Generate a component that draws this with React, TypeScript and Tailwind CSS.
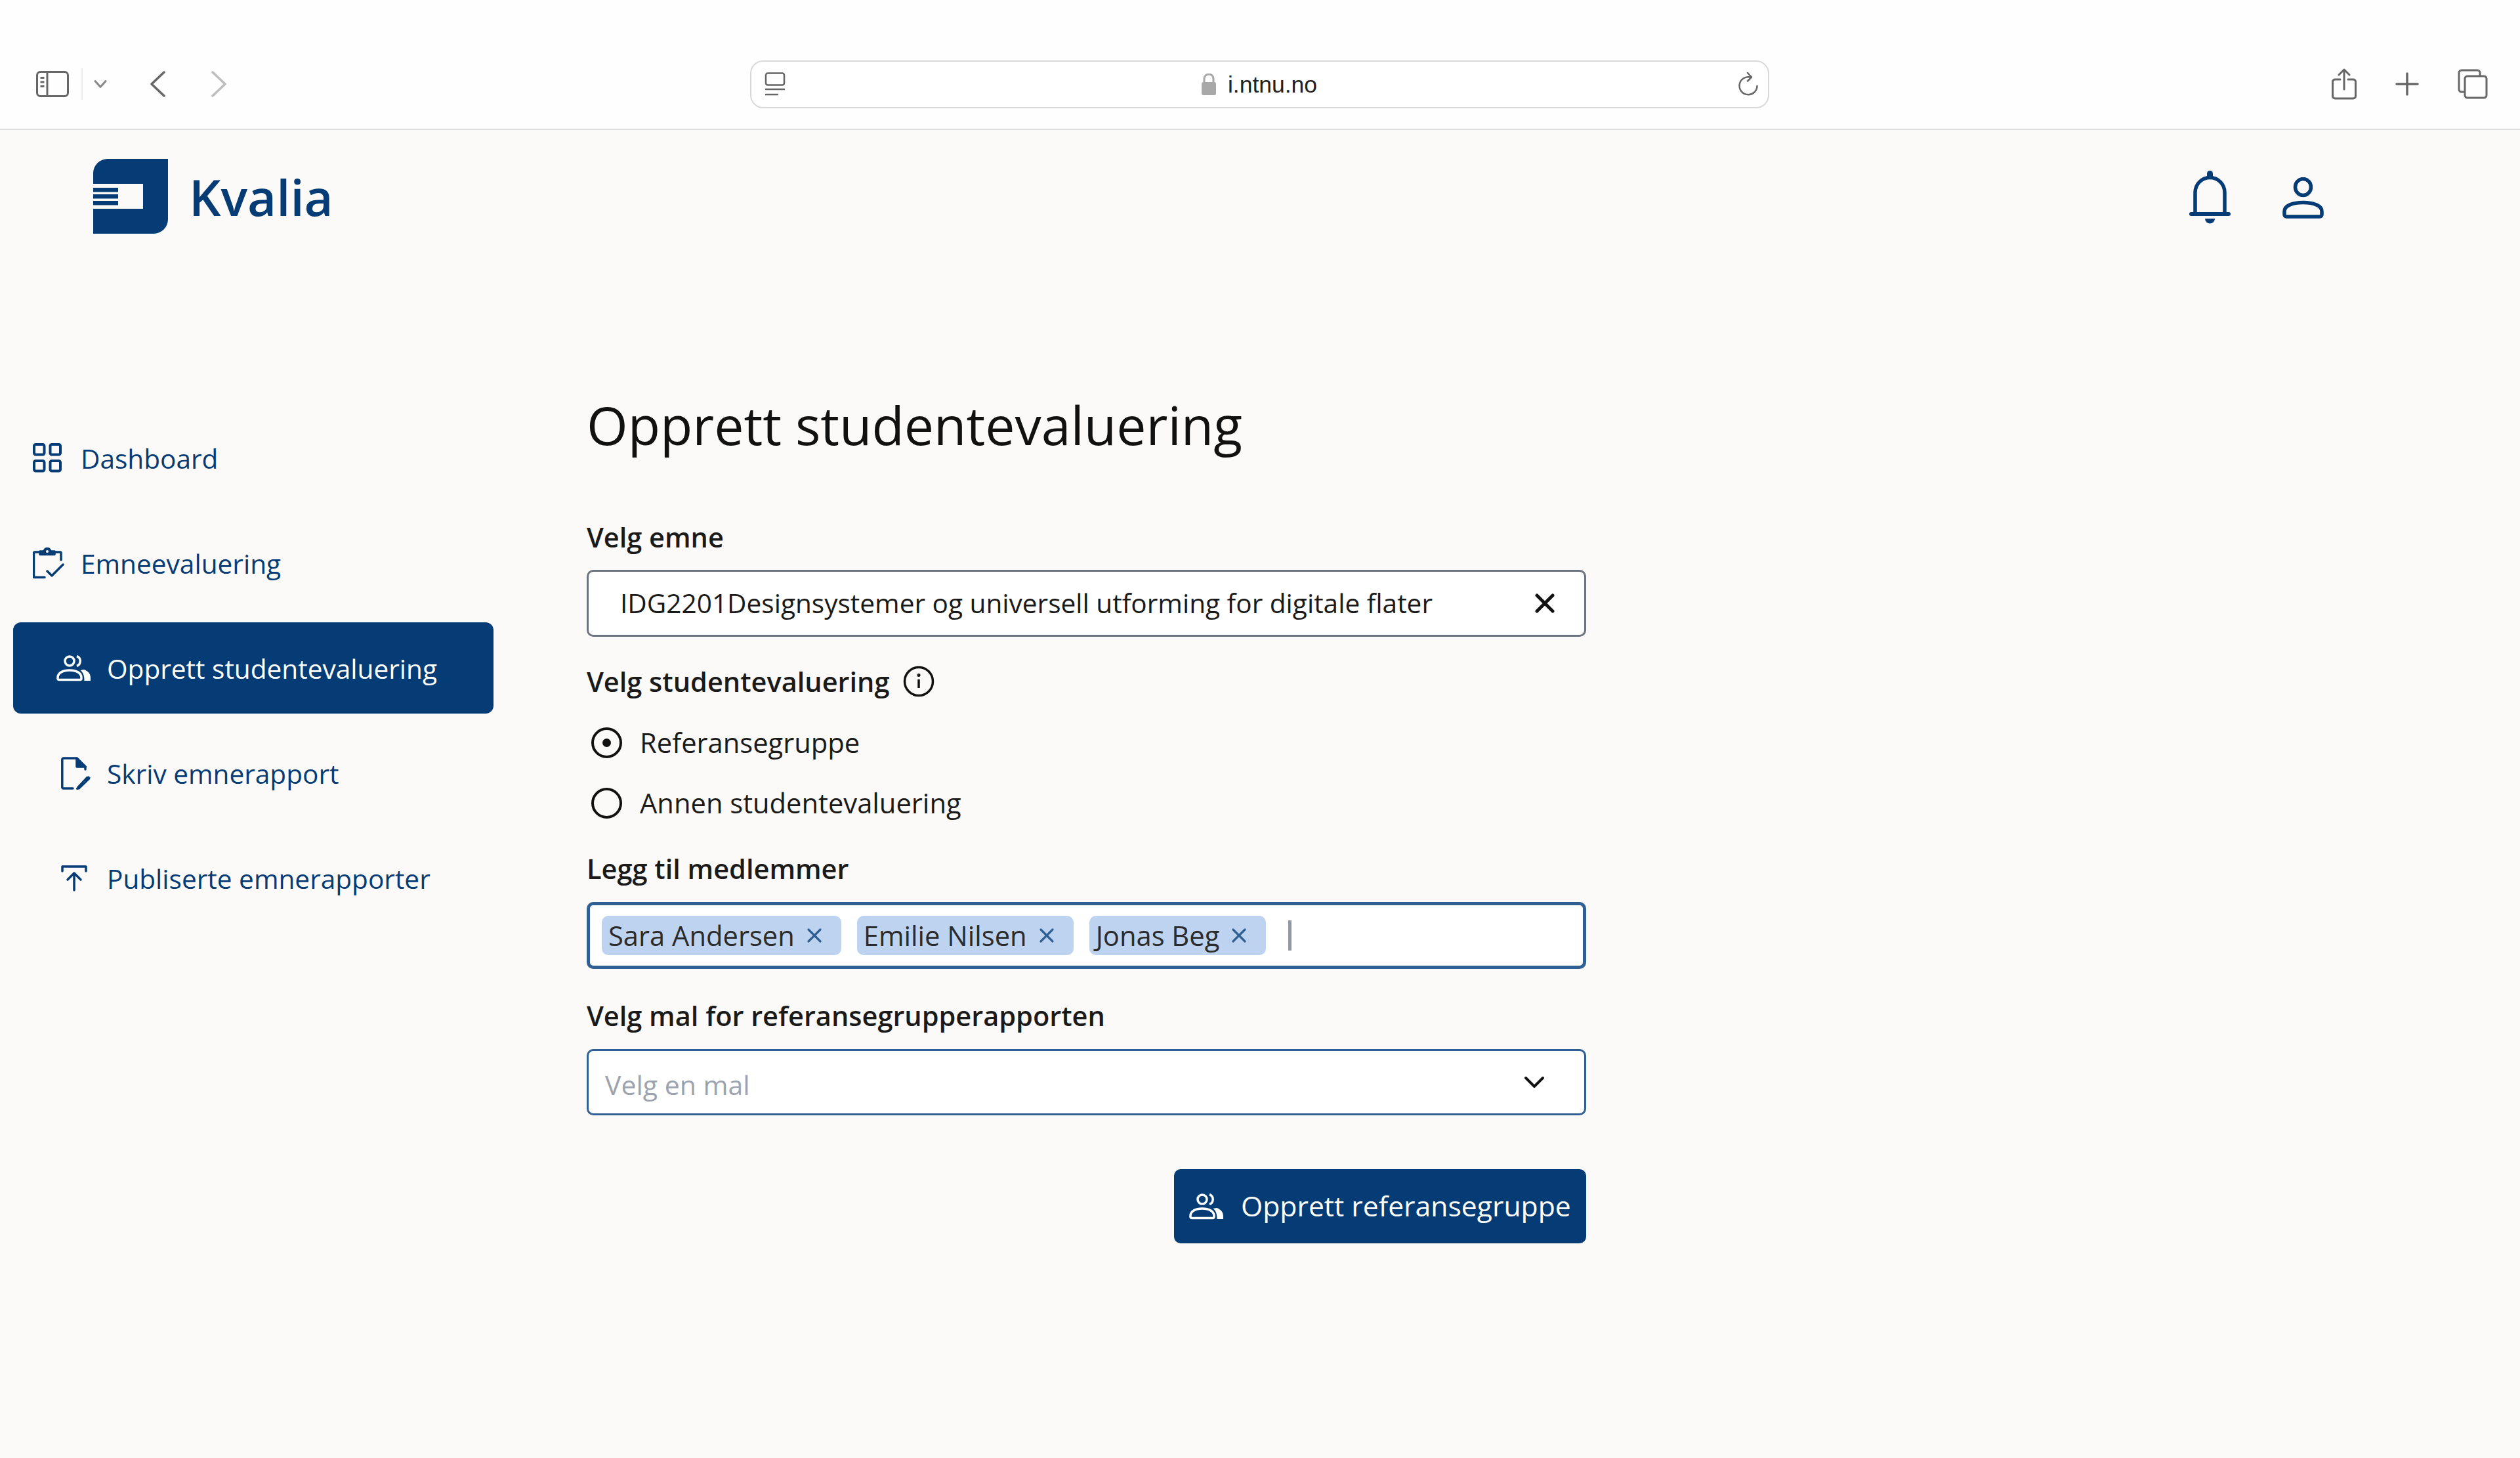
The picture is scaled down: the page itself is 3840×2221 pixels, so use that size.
import type { ReactNode } from 'react';

const navy = '#053c75';

function Logo() {
  return (
    <svg width="114" height="114" viewBox="0 0 114 114" className="shrink-0">
      <path d="M0 114V22A22 22 0 0 1 22 0H114V92A22 22 0 0 1 92 114Z" fill={navy} />
      <rect x="0" y="38" width="76" height="38" fill="#fbfaf8" />
      <rect x="0" y="44" width="38" height="6.5" fill={navy} />
      <rect x="0" y="54" width="38" height="6.5" fill={navy} />
      <rect x="0" y="64" width="38" height="6.5" fill={navy} />
    </svg>
  );
}

function DashboardIcon() {
  return (
    <svg width="44" height="45" viewBox="0 0 44 45" fill="none" stroke={navy} strokeWidth="4">
      <rect x="2" y="2" width="15.5" height="15.5" rx="2.5" />
      <rect x="26.5" y="2" width="15.5" height="15.5" rx="2.5" />
      <rect x="2" y="27" width="15.5" height="15.5" rx="2.5" />
      <rect x="26.5" y="27" width="15.5" height="15.5" rx="2.5" />
    </svg>
  );
}

function ClipboardCheckIcon() {
  return (
    <svg width="48" height="48" viewBox="0 0 48 48" fill="none" stroke={navy} strokeWidth="3.5" strokeLinecap="round" strokeLinejoin="round">
      <path d="M11 7H3a1.5 1.5 0 0 0-1.5 1.500V45.500H18" />
      <path d="M33 7h8.500A1.500 1.500 0 0 1 43 8.500V19" />
      <path d="M11 10.500V6h6.500a4.500 4.500 0 0 1 9 0H33v4.500Z" fill={navy} />
      <circle cx="22" cy="6" r="2" fill="#fbfaf8" stroke="none" />
      <path d="M22 36l7 7 17-17" strokeWidth="3.500" />
    </svg>
  );
}

function PeopleIcon({ color }: { color: string }) {
  return (
    <svg width="53" height="40" viewBox="0 0 53 40" fill="none" stroke={color} strokeWidth="3.500">
      <circle cx="20" cy="9" r="7" />
      <path d="M2 34c0-7 8-11 18-11s18 4 18 11v1.500a2 2 0 0 1-2 2H4a2 2 0 0 1-2-2Z" />
      <path d="M31 1.500a8 8 0 0 1 0 15" strokeWidth="3.500" />
      <path d="M42 22c6 2 10 6 10 13v4H42.500c0-7-1-12-6-16Z" fill={color} stroke="none" />
    </svg>
  );
}

function DocumentEditIcon() {
  return (
    <svg width="46" height="50" viewBox="0 0 46 50" fill="none" stroke={navy} strokeWidth="3.500" strokeLinecap="round" strokeLinejoin="round">
      <path d="M18 48H3.500A1.800 1.800 0 0 1 1.800 46V4A2 2 0 0 1 3.800 2H24l13 13v4" />
      <path d="M24 2v13h13Z" fill={navy} />
      <path d="M26 46l-1.500 2.500 3-.5 15-14.500-2.500-2.500Z" strokeWidth="3" />
      <path d="M35 36l7-7 3 3-7 7Z" fill={navy} stroke="none" />
    </svg>
  );
}

function UploadIcon() {
  return (
    <svg width="40" height="40" viewBox="0 0 40 40" fill="none" stroke={navy} strokeWidth="3.500" strokeLinecap="round" strokeLinejoin="round">
      <path d="M2 9V2h36v7" />
      <path d="M20 38V13M10 22l10-10 10 10" />
    </svg>
  );
}

function NavItem({ icon, label, active, indent }: { icon: ReactNode; label: string; active?: boolean; indent?: boolean }) {
  return (
    <a
      className={
        active
          ? 'flex h-[139px] items-center rounded-[12px] bg-[#053c75] pl-[66px] text-white'
          : indent
            ? 'flex h-[139px] items-center pl-[73px] text-[#053c75]'
            : 'flex h-[139px] items-center pl-[30px] text-[#053c75]'
      }
    >
      <span className={active ? 'flex w-[77px] shrink-0 items-center' : indent ? 'flex w-[70px] shrink-0 items-center' : 'flex w-[73px] shrink-0 items-center'}>{icon}</span>
      <span className="pt-[3px] text-[40.6px] leading-none">{label}</span>
    </a>
  );
}

function Chip({ name }: { name: string }) {
  return (
    <span className="flex h-[60px] items-center gap-[18px] rounded-[10px] bg-[#bdd3f0] pl-[10px] pr-[29px] text-[41.7px] leading-none text-[#2b2b2b]">
      {name}
      <svg width="24" height="24" viewBox="0 0 24 24" stroke="#2f5f93" strokeWidth="3.200" strokeLinecap="round">
        <path d="M3 3l18 18M21 3L3 21" />
      </svg>
    </span>
  );
}

export default function App() {
  return (
    <div className="flex h-[2221px] flex-col overflow-hidden bg-[#fbfaf8] font-['Open_Sans',sans-serif]">
      {/* browser chrome */}
      <div className="flex h-[198px] shrink-0 items-center border-b-2 border-[#dfdfdf] bg-[#fefefe] pt-[60px]">
        <div className="flex w-[1143px] shrink-0 items-center pl-[55px]">
          <svg width="50" height="40" viewBox="0 0 50 40" fill="none" stroke="#666" strokeWidth="3">
            <rect x="1.500" y="1.500" width="47" height="37" rx="5" />
            <path d="M17 1.500v37" />
            <path d="M6.500 10.500h6M6.500 17h6M6.500 23.500h6" />
          </svg>
          <span className="ml-[19px] h-[48px] w-[2px] bg-[#ececec]" />
          <svg width="20" height="14" viewBox="0 0 20 14" fill="none" stroke="#888" strokeWidth="3" strokeLinecap="round" strokeLinejoin="round" className="ml-[17px]">
            <path d="M2 2.500l8 9 8-9" />
          </svg>
          <svg width="24" height="40" viewBox="0 0 24 40" fill="none" stroke="#666" strokeWidth="3.500" strokeLinecap="round" strokeLinejoin="round" className="ml-[65px]">
            <path d="M22 2L3 20l19 18" />
          </svg>
          <svg width="24" height="40" viewBox="0 0 24 40" fill="none" stroke="#bdbdbd" strokeWidth="3.500" strokeLinecap="round" strokeLinejoin="round" className="ml-[70px]">
            <path d="M2 2l19 18L2 38" />
          </svg>
        </div>

        <div className="flex h-[73px] w-[1553px] shrink-0 items-center rounded-[20px] border-2 border-[#d9d9d9] bg-white pl-[20px] pr-[14px]">
          <svg width="32" height="36" viewBox="0 0 32 36" fill="none" stroke="#666" strokeWidth="2.500" strokeLinecap="round">
            <rect x="2" y="1.500" width="28" height="18" rx="3" />
            <path d="M2 26h28M2 34h18" />
          </svg>
          <div className="flex flex-1 items-center justify-center gap-[17px] pr-[8px]">
            <svg width="24" height="33" viewBox="0 0 24 33" fill="none">
              <path d="M5 14V8a7 7 0 0 1 14 0v6" stroke="#a8a8a8" strokeWidth="3" />
              <rect x="1" y="13" width="22" height="20" rx="3" fill="#a8a8a8" />
            </svg>
            <span className="pt-[3px] font-['Liberation_Sans',sans-serif] text-[35.5px] leading-none text-[#222]">i.ntnu.no</span>
          </div>
          <svg width="32" height="36" viewBox="0 0 32 36" fill="none" stroke="#666" strokeWidth="2.500" strokeLinecap="round" strokeLinejoin="round">
            <path d="M19 7.500A13.500 13.500 0 1 0 29.500 21" />
            <path d="M15 1l6 6.500-6 6" />
          </svg>
        </div>

        <div className="flex flex-1 items-center gap-[59px] pl-[857px]">
          <svg width="38" height="48" viewBox="0 0 38 48" fill="none" stroke="#666" strokeWidth="3" strokeLinecap="round" strokeLinejoin="round">
            <path d="M13 17H5a3.500 3.500 0 0 0-3.500 3.500v22A3.500 3.500 0 0 0 5 46h28a3.500 3.500 0 0 0 3.500-3.500v-22A3.500 3.500 0 0 0 33 17h-8" />
            <path d="M19 32V2M11 10l8-8 8 8" />
          </svg>
          <svg width="36" height="36" viewBox="0 0 36 36" stroke="#666" strokeWidth="3.500" strokeLinecap="round">
            <path d="M18 2v32M2 18h32" />
          </svg>
          <svg width="46" height="46" viewBox="0 0 46 46" fill="none" stroke="#666" strokeWidth="3" strokeLinejoin="round">
            <path d="M10 35H6a4 4 0 0 1-4-4V6a4 4 0 0 1 4-4h24a4 4 0 0 1 4 4v4" />
            <rect x="11" y="11" width="33" height="33" rx="4" />
          </svg>
        </div>
      </div>

      {/* app header */}
      <header className="flex shrink-0 items-center justify-between pl-[142px] pr-[299px] pt-[44px]">
        <div className="flex items-center gap-[32px]">
          <Logo />
          <span className="pt-[2px] text-[76px] font-semibold leading-none text-[#053c75]">Kvalia</span>
        </div>
        <div className="flex items-center gap-[79px]">
          <svg width="63" height="82" viewBox="0 0 63 82" fill="none" className="mt-[4px]">
            <path d="M9 66V33a22.500 22.500 0 0 1 45 0v33" stroke={navy} strokeWidth="5.500" />
            <path d="M31.500 0a4.500 4.500 0 0 1 4.500 4.500V12h-9V4.500A4.500 4.500 0 0 1 31.500 0Z" fill={navy} />
            <path d="M3 66h57" stroke={navy} strokeWidth="6" strokeLinecap="round" />
            <path d="M24 73h15a7.500 7.500 0 0 1-15 0Z" fill={navy} />
          </svg>
          <svg width="63" height="63" viewBox="0 0 63 63" fill="none" stroke={navy} strokeWidth="5.500" className="mt-[4px]">
            <ellipse cx="31.500" cy="15" rx="12" ry="12.500" />
            <path d="M3 52c0-9 13-13.500 28.500-13.500S60 43 60 52v5a3 3 0 0 1-3 3H6a3 3 0 0 1-3-3Z" strokeLinejoin="round" />
          </svg>
        </div>
      </header>

      <div className="flex flex-1 items-start pl-[20px] pt-[272px]">
        <nav className="flex w-[732px] shrink-0 flex-col gap-[21px]">
          <NavItem icon={<DashboardIcon />} label="Dashboard" />
          <NavItem icon={<ClipboardCheckIcon />} label="Emneevaluering" />
          <NavItem icon={<PeopleIcon color="#ffffff" />} label="Opprett studentevaluering" active />
          <NavItem icon={<DocumentEditIcon />} label="Skriv emnerapport" indent />
          <NavItem icon={<UploadIcon />} label="Publiserte emnerapporter" indent />
        </nav>

        <main className="mt-[-36px] ml-[142px] w-[1523px]">
          <h1 className="text-[80.6px] font-normal leading-[110px] text-[#111]">Opprett studentevaluering</h1>

          <label className="mt-[87px] block text-[41.5px] font-semibold leading-[58px] text-[#1a1a1a]">Velg emne</label>
          <div className="mt-[21px] flex h-[102px] items-center justify-between rounded-[10px] border-[3px] border-[#6b7280] bg-white pl-[48px] pr-[45px]">
            <span className="text-[40.6px] leading-none text-[#1a1a1a]">IDG2201Designsystemer og universell utforming for digitale flater</span>
            <svg width="30" height="30" viewBox="0 0 30 30" stroke="#111" strokeWidth="5" strokeLinecap="round">
              <path d="M3 3l24 24M27 3L3 27" />
            </svg>
          </div>

          <div className="mt-[39px] flex h-[58px] items-center gap-[21px]">
            <span className="text-[41.5px] font-semibold leading-[58px] text-[#1a1a1a]">Velg studentevaluering</span>
            <svg width="48" height="48" viewBox="0 0 48 48" fill="none" stroke="#111" strokeWidth="3.500">
              <circle cx="24" cy="24" r="21.500" />
              <path d="M24 21v13" strokeWidth="3.500" />
              <circle cx="24" cy="14.500" r="2.500" fill="#111" stroke="none" />
            </svg>
          </div>

          <div className="mt-[34px] flex h-[60px] items-center gap-[27px] pl-[7px]">
            <span className="flex h-[47px] w-[47px] items-center justify-center rounded-full border-[4px] border-[#111]">
              <span className="h-[13px] w-[13px] rounded-full bg-[#111]" />
            </span>
            <span className="text-[41.7px] leading-none text-[#1a1a1a]">Referansegruppe</span>
          </div>
          <div className="mt-[32px] flex h-[60px] items-center gap-[27px] pl-[7px]">
            <span className="h-[47px] w-[47px] rounded-full border-[4px] border-[#111]" />
            <span className="text-[41.7px] leading-none text-[#1a1a1a]">Annen studentevaluering</span>
          </div>

          <label className="mt-[41px] block text-[41.5px] font-semibold leading-[58px] text-[#1a1a1a]">Legg til medlemmer</label>
          <div className="mt-[22px] flex h-[102px] items-center gap-[24px] rounded-[10px] border-[5px] border-[#2f5f93] bg-white pl-[18px]">
            <Chip name="Sara Andersen" />
            <Chip name="Emilie Nilsen" />
            <Chip name="Jonas Beg" />
            <span className="ml-[10px] h-[46px] w-[5px] bg-[#8f98a5]" />
          </div>

          <label className="mt-[42px] block text-[41.5px] font-semibold leading-[58px] text-[#1a1a1a]">Velg mal for referansegrupperapporten</label>
          <div className="mt-[22px] flex h-[101px] items-center justify-between rounded-[10px] border-[3px] border-[#2f5f93] bg-white pl-[25px] pr-[60px]">
            <span className="mt-[8px] text-[41px] leading-none text-[#9ca3af]">Velg en mal</span>
            <svg width="32" height="20" viewBox="0 0 32 20" fill="none" stroke="#111" strokeWidth="4" strokeLinecap="round" strokeLinejoin="round">
              <path d="M3 3l13 13L29 3" />
            </svg>
          </div>

          <div className="mt-[82px] flex justify-end">
            <button className="flex h-[113px] w-[628px] items-center gap-[26px] rounded-[10px] bg-[#053c75] pl-[23px] text-[42.7px] font-medium leading-none text-white">
              <PeopleIcon color="#ffffff" />
              Opprett referansegruppe
            </button>
          </div>
        </main>
      </div>
    </div>
  );
}
